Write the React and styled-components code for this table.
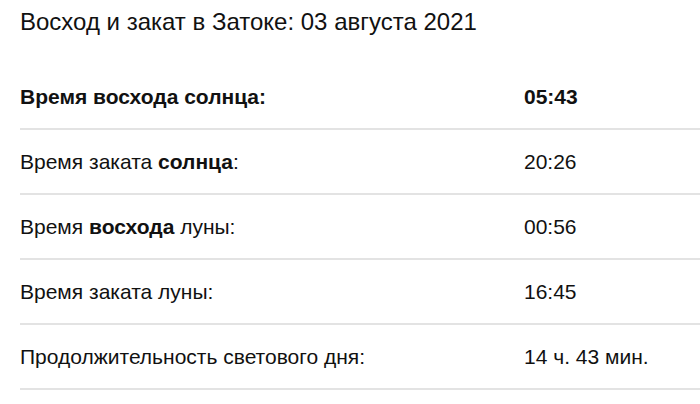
import React from "react";
import styled, { createGlobalStyle } from "styled-components";

const GlobalStyle = createGlobalStyle`
  body {
    margin: 0;
    background: #fff;
    font-family: "Liberation Sans", Arial, sans-serif;
    color: #111;
  }
`;

const Page = styled.div`
  padding-left: 20px;
`;

const Title = styled.h1`
  margin: 0;
  height: 65px;
  padding-top: 8px;
  box-sizing: border-box;
  font-size: 24px;
  font-weight: normal;
  line-height: 28px;
`;

const Row = styled.div`
  display: grid;
  grid-template-columns: 504px 1fr;
  align-items: center;
  height: 65px;
  box-sizing: border-box;
  border-bottom: 2px solid #e3e3e3;
  font-size: 21px;
  font-weight: ${(p) => (p.$bold ? "bold" : "normal")};
  padding-top: 1px;
`;

const rows = [
  { label: <>Время восхода солнца:</>, value: "05:43", bold: true },
  { label: <>Время заката <b>солнца</b>:</>, value: "20:26" },
  { label: <>Время <b>восхода</b> луны:</>, value: "00:56" },
  { label: <>Время заката луны:</>, value: "16:45" },
  { label: <>Продолжительность светового дня:</>, value: "14 ч. 43 мин." },
];

export default function App() {
  return (
    <Page>
      <GlobalStyle />
      <Title>Восход и закат в Затоке: 03 августа 2021</Title>
      {rows.map((r, i) => (
        <Row key={i} $bold={r.bold}>
          <span>{r.label}</span>
          <span>{r.value}</span>
        </Row>
      ))}
    </Page>
  );
}
